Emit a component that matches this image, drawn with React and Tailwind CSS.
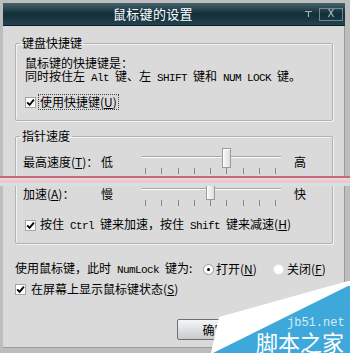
import React from "react";

const mono = "font-['Liberation_Mono',monospace] text-[11px] tracking-[-0.6px]";

function Check() {
  return (
    <span className="inline-flex w-[11px] h-[11px] shrink-0 items-center justify-center bg-white border border-[#a4a4a4]">
      <svg width="9" height="9" viewBox="0 0 9 9">
        <path d="M1.2 4.4 L3.6 6.8 L7.9 1.6" stroke="#000" strokeWidth="1.9" fill="none" />
      </svg>
    </span>
  );
}

function Radio({ on }) {
  return (
    <span
      className={
        "inline-flex w-[11px] h-[11px] shrink-0 rounded-full items-center justify-center bg-white border " +
        (on ? "border-[#9a9a9a]" : "border-[#e4e4e4]")
      }
    >
      {on && <span className="w-[3px] h-[3px] rounded-full bg-black" />}
    </span>
  );
}

function Slider({ pos }) {
  const ticks = [0, 1, 2, 3, 4, 5, 6, 7, 8];
  return (
    <div className="relative w-[141px] h-[29px]">
      <div className="absolute left-[2px] right-[0px] top-[9px] h-[2px] border-t border-[#a8a8a8] border-b border-b-white" />
      <div className="absolute left-0 right-0 top-[21px] flex justify-between px-[5px]">
        {ticks.map((t) => (
          <span key={t} className="w-px h-[6px] bg-[#8a8a8a]" />
        ))}
      </div>
      <div
        className="absolute top-[1px] w-[9px] h-[20px] border border-[#9c9c9c] bg-gradient-to-r from-[#fafafa] to-[#dedede] shadow-[inset_1px_1px_0_#fff]"
        style={{ left: 5 + pos * 16.25 - 4 }}
      />
    </div>
  );
}

export default function App() {
  return (
    <div className="relative w-[350px] h-[353px] overflow-hidden bg-[#bdbdbd] pt-[3px] pl-[3px] pr-[5px] pb-[5px] font-['Noto_Sans_CJK_SC',sans-serif] text-[12px] text-black">
      <div className="flex flex-col h-full bg-[#dadada] shadow-[inset_-1px_-1px_0_#9a9a9a]">
        {/* title bar */}
        <div className="relative flex items-center h-[23px] shrink-0 bg-gradient-to-b from-[#46636e] via-[#122e39] to-[#23434f] border-b border-[#0c1e25]">
          <span className="ml-[110px] text-[13px] leading-[16px] text-white tracking-[0.3px]">鼠标键的设置</span>
          <div className="ml-auto mr-[2px] flex items-center gap-[5px]">
            <svg width="10" height="8" viewBox="0 0 10 8">
              <path d="M1 1.5 H8 M4.5 1.5 V7" stroke="#9fb2b8" strokeWidth="1.2" fill="none" />
            </svg>
            <div className="w-[24px] h-[13px] border border-[#6e8b94] flex items-center justify-center text-[#b9c8cc] text-[10px] leading-none font-['DejaVu_Sans',sans-serif]">
              X
            </div>
          </div>
        </div>

        <div className="flex flex-col pl-[12px]">
          {/* group 1 */}
          <fieldset className="mt-[10px] w-[318px] border border-[#b2b2b2] rounded-[2px] shadow-[inset_1px_1px_0_#f2f2f2,1px_1px_0_#f2f2f2] pl-[9px] pt-[6px] pb-[10px]">
            <legend className="-ml-[5px] px-[2px] leading-[14px] text-[12px]">键盘快捷键</legend>
            <div className="leading-[13px]">鼠标键的快捷键是：</div>
            <div className="leading-[13px] whitespace-nowrap">
              同时按住左<span className={mono}> Alt </span>键、左<span className={mono}> SHIFT </span>键和
              <span className={mono}> NUM LOCK </span>键。
            </div>
            <div className="mt-[9px] flex items-center h-[16px]">
              <Check />
              <span className="ml-[2px] px-[1px] border border-dotted border-[#444] leading-[14px]">
                使用快捷键(<span className="underline">U</span>)
              </span>
            </div>
          </fieldset>

          {/* group 2 */}
          <fieldset className="mt-[8px] w-[318px] border border-[#b2b2b2] rounded-[2px] shadow-[inset_1px_1px_0_#f2f2f2,1px_1px_0_#f2f2f2] pl-[7px] pt-[4px] pb-[10px]">
            <legend className="-ml-[3px] px-[2px] leading-[14px] text-[12px]">指针速度</legend>
            <div className="flex items-center h-[29px]">
              <span className="w-[78px]">最高速度(<span className="underline">T</span>)：</span>
              <span className="w-[39px]">低</span>
              <Slider pos={5} />
              <span className="ml-[13px]">高</span>
            </div>
            <div className="mt-[3px] flex items-center h-[29px]">
              <span className="w-[78px]">加速(<span className="underline">A</span>)：</span>
              <span className="w-[39px]">慢</span>
              <Slider pos={4} />
              <span className="ml-[13px]">快</span>
            </div>
            <div className="mt-[9px] ml-[2px] flex items-center h-[16px] whitespace-nowrap">
              <Check />
              <span className="ml-[4px]">
                按住<span className={mono}> Ctrl </span>键来加速，按住<span className={mono}> Shift </span>键来减速(<span className="underline">H</span>)
              </span>
            </div>
          </fieldset>

          <div className="mt-[17px] flex items-center h-[16px] whitespace-nowrap">
            <span className="w-[188px]">
              使用鼠标键，此时<span className={mono}> NumLock </span>键为:
            </span>
            <div className="w-[70px] flex items-center gap-[2px]">
              <Radio on />
              <span>打开(<span className="underline">N</span>)</span>
            </div>
            <div className="flex items-center gap-[3px]">
              <Radio />
              <span>关闭(<span className="underline">F</span>)</span>
            </div>
          </div>

          <div className="mt-[4px] flex items-center h-[16px]">
            <Check />
            <span className="ml-[5px]">在屏幕上显示鼠标键状态(<span className="underline">S</span>)</span>
          </div>

          <div className="mt-[22px] ml-[162px] w-[75px] h-[21px] border border-[#6f6f6f] rounded-[2px] bg-gradient-to-b from-[#f6f6f6] to-[#c6cbcf] flex items-center justify-center">
            确定
          </div>
        </div>
      </div>

      {/* red annotation line */}
      <div className="absolute left-0 right-0 top-[176px] h-[2px] bg-[#c96877]" />
      <div className="absolute left-0 right-0 top-[178px] h-[2px] bg-[#e3d6da]" />
      <div className="absolute left-0 right-0 top-[180px] h-[3px] bg-[#f0c5d2]" />
      <div className="absolute left-0 right-0 top-[183px] h-[3px] bg-[#d3e2dc]" />

      {/* watermark */}
      <svg className="absolute left-0 top-0" width="350" height="353" viewBox="0 0 350 353">
        <polygon points="211,353 219,317 348,281 350,281 350,353" fill="#ffffff" />
        <polygon points="213,353 348,286 350,286 350,353" fill="#3ea8db" />
      </svg>
      <span className="absolute left-[287px] top-[316px] text-[12px] leading-[14px] text-[#d4ecf7] font-['Liberation_Mono',monospace]">
        jb51.net
      </span>
      <span className="absolute left-[256px] top-[330px] text-[22px] leading-[23px] text-white">
        脚本之家
      </span>
    </div>
  );
}
